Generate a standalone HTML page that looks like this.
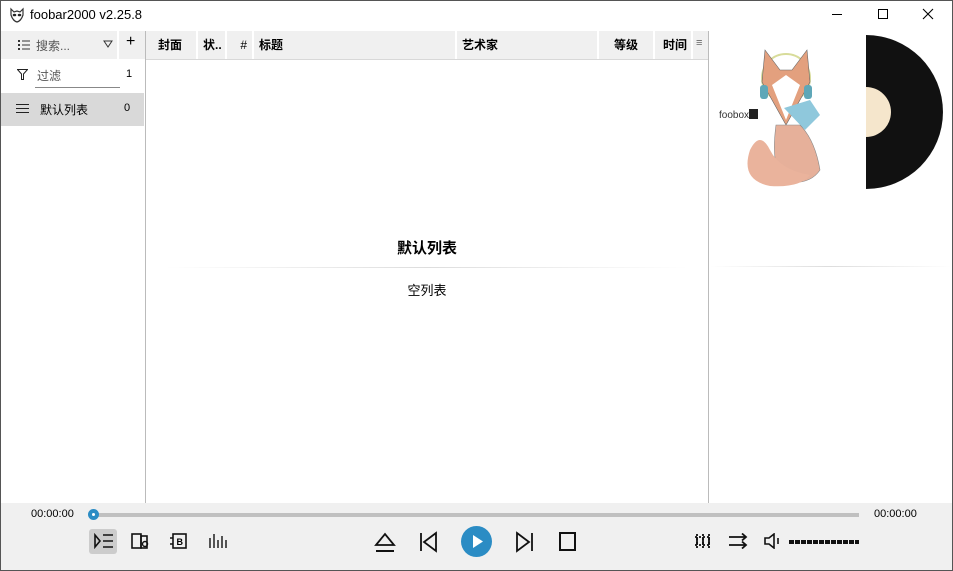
<!DOCTYPE html>
<html><head><meta charset="utf-8"><style>
*{margin:0;padding:0;box-sizing:border-box}
body{width:953px;height:571px;overflow:hidden;font-family:"Liberation Sans","Noto Sans CJK SC",sans-serif;font-size:12px;color:#000;background:#fff;position:relative}
.brd{position:absolute;left:0;top:0;width:953px;height:571px;border:1px solid #555}
.abs{position:absolute}
.hdr{background:#f0f0f0}
.hc{position:absolute;top:31px;height:28px;line-height:28px;font-weight:bold;font-size:12px;border-right:2px solid #fff}
</style></head><body>
<!-- title bar -->
<svg class="abs" style="left:9px;top:7px" width="16" height="16" viewBox="0 0 16 16"><path d="M2 2 L5 5 L8 4 L11 5 L14 2 L14 8 Q12 14 8 15 Q4 14 2 8Z" fill="#fff" stroke="#333" stroke-width="1.2"/><ellipse cx="5.5" cy="8" rx="1.8" ry="1.3" fill="#222"/><ellipse cx="10.5" cy="8" rx="1.8" ry="1.3" fill="#222"/></svg>
<div class="abs" style="left:30px;top:7px;font-size:13px">foobar2000 v2.25.8</div>
<div class="abs" style="left:832px;top:14px;width:10px;height:1px;background:#000"></div>
<div class="abs" style="left:878px;top:9px;width:10px;height:10px;border:1px solid #000"></div>
<svg class="abs" style="left:922px;top:8px" width="12" height="12"><path d="M1 1L11 11M11 1L1 11" stroke="#000" stroke-width="1.1"/></svg>

<!-- header row -->
<div class="abs hdr" style="left:1px;top:31px;width:707px;height:28px"></div>
<div class="abs" style="left:145px;top:31px;width:1px;height:472px;background:#bbb"></div>
<div class="abs" style="left:708px;top:31px;width:1px;height:472px;background:#bbb"></div>
<div class="abs" style="left:146px;top:59px;width:562px;height:1px;background:#d8d8d8"></div>
<div class="abs" style="left:117px;top:31px;width:2px;height:28px;background:#fff"></div>
<svg class="abs" style="left:18px;top:39px" width="12" height="11"><g fill="#333"><rect x="0" y="1" width="2" height="2"/><rect x="0" y="5" width="2" height="2"/><rect x="0" y="9" width="2" height="2"/><rect x="4" y="1.5" width="8" height="1"/><rect x="4" y="5.5" width="8" height="1"/><rect x="4" y="9.5" width="8" height="1"/></g></svg>
<div class="abs" style="left:36px;top:37px;color:#555;font-size:12px">搜索...</div>
<svg class="abs" style="left:103px;top:40px" width="10" height="8"><path d="M1 1H9L5 7Z" fill="none" stroke="#333"/></svg>
<div class="abs" style="left:126px;top:33px;font-size:16px">+</div>
<div class="hc" style="left:146px;width:52px;padding-left:12px">封面</div>
<div class="hc" style="left:198px;width:29px;padding-left:5px">状..</div>
<div class="hc" style="left:227px;width:27px;text-align:right;padding-right:5px;font-weight:normal">#</div>
<div class="hc" style="left:254px;width:203px;padding-left:5px">标题</div>
<div class="hc" style="left:457px;width:142px;padding-left:5px">艺术家</div>
<div class="hc" style="left:599px;width:56px;text-align:right;padding-right:15px">等级</div>
<div class="hc" style="left:655px;width:38px;padding-left:8px">时间</div>
<div class="abs" style="left:696px;top:37px;color:#666;font-size:11px">≡</div>

<!-- left panel -->
<svg class="abs" style="left:17px;top:69px" width="11" height="11"><path d="M0.5 0.5H10.5L6.5 5V10.5H4.5V5Z" fill="none" stroke="#222"/></svg>
<div class="abs" style="left:37px;top:67px;color:#555">过滤</div>
<div class="abs" style="left:35px;top:87px;width:85px;height:1px;background:#888"></div>
<div class="abs" style="left:126px;top:68px;font-size:11px">1</div>
<div class="abs" style="left:1px;top:93px;width:143px;height:33px;background:#d9d9d9"></div>
<svg class="abs" style="left:16px;top:103px" width="13" height="11"><path d="M0 1.5H13M0 5.5H13M0 9.5H13" stroke="#222"/></svg>
<div class="abs" style="left:40px;top:101px">默认列表</div>
<div class="abs" style="left:124px;top:102px;font-size:11px">0</div>

<!-- center -->
<div class="abs" style="left:146px;top:237px;width:562px;text-align:center;font-weight:bold;font-size:15px">默认列表</div>
<div class="abs" style="left:166px;top:267px;width:522px;height:1px;background:linear-gradient(90deg,#fff,#ddd,#fff)"></div>
<div class="abs" style="left:146px;top:280px;width:562px;text-align:center;font-size:13px">空列表</div>

<!-- right art -->
<div class="abs" style="left:709px;top:266px;width:243px;height:1px;background:linear-gradient(90deg,#fff,#ddd,#fff)"></div>
<svg class="abs" style="left:710px;top:30px" width="243" height="165" viewBox="0 0 243 165">
<path d="M156 5 A77 77 0 0 1 156 159Z" fill="#111"/>
<path d="M156 57 A25 25 0 0 1 156 107Z" fill="#f5e6cc"/>
<ellipse cx="76" cy="48" rx="24" ry="24" fill="none" stroke="#d8dc9a" stroke-width="2"/>
<path d="M52 52 L55 20 L70 40 L82 40 L97 20 L100 52 L76 95Z" fill="#e3a07e" stroke="#666" stroke-width="0.6"/>
<path d="M62 55 L76 45 L90 55 L76 90Z" fill="#fff"/>
<rect x="50" y="55" width="8" height="14" rx="3" fill="#5fa7b8"/><rect x="94" y="55" width="8" height="14" rx="3" fill="#5fa7b8"/>
<path d="M74 78 L100 70 L110 85 L95 100Z" fill="#8fc8dc"/>
<path d="M66 95 Q60 140 76 152 Q100 155 110 140 Q105 110 90 95Z" fill="#e6b09a" stroke="#888" stroke-width="0.6"/>
<path d="M40 120 Q30 150 60 156 Q90 158 100 145 Q70 140 60 120 Q50 100 40 120Z" fill="#eab39c"/>
<text x="9" y="88" font-family="Liberation Sans,sans-serif" font-size="10" fill="#333">foobox</text>
<rect x="39" y="79" width="9" height="10" fill="#222"/>
</svg>

<!-- bottom bar -->
<div class="abs hdr" style="left:1px;top:503px;width:951px;height:67px"></div>
<div class="abs" style="left:31px;top:508px;font-size:11px">00:00:00</div>
<div class="abs" style="left:874px;top:508px;font-size:11px">00:00:00</div>
<div class="abs" style="left:95px;top:513px;width:764px;height:4px;background:#c0c0c0"></div>
<div class="abs" style="left:88px;top:509px;width:11px;height:11px;border-radius:50%;background:#2b8cc4;border:3px solid #2b8cc4"><div style="width:3px;height:3px;background:#fff;border-radius:50%;margin:1px"></div></div>
<div class="abs" style="left:89px;top:529px;width:28px;height:25px;background:#ccc;border-radius:3px"></div>
<svg class="abs" style="left:94px;top:533px" width="20" height="16"><path d="M1 2L6 8L1 14Z" fill="none" stroke="#111" stroke-width="1.6"/><path d="M9 2H19M9 8H19M9 14H19" stroke="#111" stroke-width="1.6"/></svg>
<svg class="abs" style="left:131px;top:533px" width="20" height="16"><rect x="1" y="1" width="9" height="14" fill="none" stroke="#111" stroke-width="1.6"/><rect x="10" y="3" width="6" height="12" fill="none" stroke="#111" stroke-width="1.6"/><circle cx="14" cy="11" r="2.5" fill="none" stroke="#111" stroke-width="1.4"/></svg>
<svg class="abs" style="left:170px;top:533px" width="20" height="16"><rect x="3" y="1" width="13" height="14" fill="none" stroke="#111" stroke-width="1.6"/><path d="M0 5H3M0 11H3" stroke="#111" stroke-width="1.6"/><text x="6.5" y="12" font-size="9" font-family="Liberation Sans" font-weight="bold">B</text></svg>
<svg class="abs" style="left:208px;top:533px" width="20" height="16"><path d="M2 5V15M6 1V15M10 7V15M14 3V15M18 7V15" stroke="#111" stroke-width="1.4"/></svg>
<svg class="abs" style="left:374px;top:531px" width="22" height="22"><path d="M2 14L11 3L20 14Z" fill="none" stroke="#111" stroke-width="1.8"/><path d="M2 20H20" stroke="#111" stroke-width="2"/></svg>
<svg class="abs" style="left:419px;top:531px" width="20" height="22"><path d="M2 2V20" stroke="#111" stroke-width="1.8"/><path d="M17 2L5 11L17 20Z" fill="none" stroke="#111" stroke-width="1.8"/></svg>
<div class="abs" style="left:461px;top:526px;width:31px;height:31px;border-radius:50%;background:#2b8cc4"></div>
<svg class="abs" style="left:461px;top:526px" width="31" height="31"><path d="M12 9L22 15.5L12 22Z" fill="#fff"/></svg>
<svg class="abs" style="left:514px;top:531px" width="20" height="22"><path d="M18 2V20" stroke="#111" stroke-width="1.8"/><path d="M3 2L15 11L3 20Z" fill="none" stroke="#111" stroke-width="1.8"/></svg>
<svg class="abs" style="left:558px;top:531px" width="20" height="22"><rect x="2" y="2" width="15" height="17" fill="none" stroke="#111" stroke-width="2"/></svg>
<svg class="abs" style="left:694px;top:533px" width="20" height="16"><path d="M3 1V15M9 1V15M15 1V15M1 4H17M1 12H17" stroke="#111" stroke-width="1.8" stroke-dasharray="2 2"/><path d="M3 4V12M9 4V12M15 4V12" stroke="#111" stroke-width="1.8"/></svg>
<svg class="abs" style="left:728px;top:533px" width="22" height="16"><path d="M1 4H18M14 0.5L18 4L14 7.5M1 12H18M14 8.5L18 12L14 15.5" fill="none" stroke="#111" stroke-width="1.8"/></svg>
<svg class="abs" style="left:764px;top:533px" width="22" height="16"><path d="M1 5H5L10 1V15L5 11H1Z" fill="none" stroke="#111" stroke-width="1.6"/><path d="M14 5V11" stroke="#111" stroke-width="1.6"/></svg>
<div class="abs" style="left:789px;top:540px;width:70px;height:4px;background:repeating-linear-gradient(90deg,#111 0 5px,#f0f0f0 5px 6px)"></div>
<div class="brd"></div>
</body></html>
